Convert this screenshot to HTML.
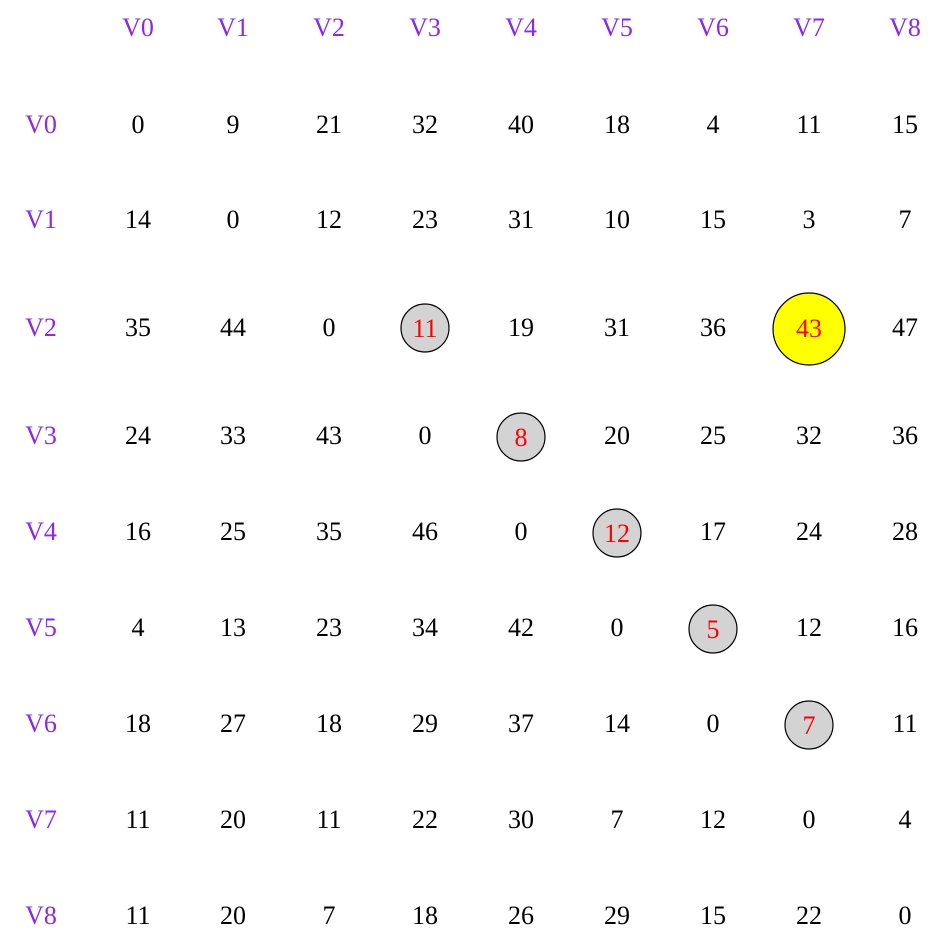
<!DOCTYPE html>
<html><head><style>body{margin:0;background:#fff}svg{display:block}text{font-family:"Liberation Serif",serif;font-size:26px;text-anchor:middle}</style></head><body>
<svg width="947" height="946" xmlns="http://www.w3.org/2000/svg">
<g fill="#d3d3d3" stroke="#000" stroke-width="1.2">
<circle cx="425" cy="328" r="24"/><circle cx="521" cy="437" r="24"/><circle cx="617" cy="533" r="24"/><circle cx="713" cy="629" r="24"/><circle cx="809" cy="725" r="24"/>
<circle cx="809" cy="329" r="36" fill="#ffff00"/>
</g>
<g id="t"></g>
</svg>
<script>
var xs=[138,233,329,425,521,617,713,809,905];
var ys=[124,219,327,435,531,627,723,819,915];
var d=[[0,9,21,32,40,18,4,11,15],[14,0,12,23,31,10,15,3,7],[35,44,0,11,19,31,36,43,47],[24,33,43,0,8,20,25,32,36],[16,25,35,46,0,12,17,24,28],[4,13,23,34,42,0,5,12,16],[18,27,18,29,37,14,0,7,11],[11,20,11,22,30,7,12,0,4],[11,20,7,18,26,29,15,22,0]];
var red={"2,3":1,"2,7":1,"3,4":1,"4,5":1,"5,6":1,"6,7":1};
var g=document.getElementById('t'),s='';
function T(x,y,c,v){s+='<text x="'+x+'" y="'+(y+9)+'" fill="'+c+'">'+v+'</text>';}
for(var i=0;i<9;i++){T(xs[i],27,'#8a2be2','V'+i);T(41,ys[i],'#8a2be2','V'+i);
for(var j=0;j<9;j++){var yy=ys[i];if(red[i+','+j])yy=[0,0,328,437,533,629,725][i];T(xs[j],yy,red[i+','+j]?'#ff0000':'#000',d[i][j]);}}
g.innerHTML=s;
</script>
</body></html>
